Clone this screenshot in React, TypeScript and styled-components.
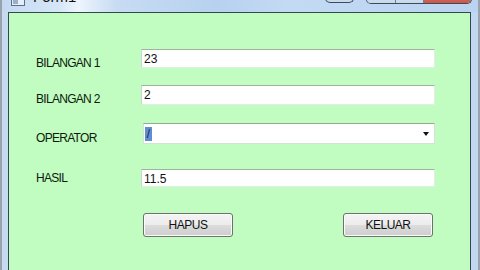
import React from 'react';
import styled, { createGlobalStyle } from 'styled-components';

const GlobalStyle = createGlobalStyle`
  html, body {
    margin: 0;
    padding: 0;
    background: #9aa3ad;
    font-family: 'Liberation Sans', Arial, sans-serif;
  }
`;

const FIELDS = [
  { label: 'BILANGAN 1', value: '23', top: 0, height: 19, labelTop: 7 },
  { label: 'BILANGAN 2', value: '2', top: 15, height: 20, labelTop: 7 },
];

export default function App() {
  return (
    <>
      <GlobalStyle />
      <Screen>
        <Window>
          <TitleBar>
            <AppIcon>
              <svg width="14" height="12" viewBox="0 0 14 12">
                <rect x="0.5" y="0.5" width="13" height="11" fill="#e8eef6" stroke="#56708e" />
                <rect x="1" y="1" width="12" height="3" fill="#4f7fc0" />
                <rect x="2" y="6" width="5" height="4" fill="#9ab0c8" />
              </svg>
            </AppIcon>
            <Caption>Form1</Caption>
            <CaptionButtons>
              <CapButton $w={29}>
                <span />
              </CapButton>
              <ButtonGroup>
                <CapButton $w={29} $joined>
                  <span />
                </CapButton>
                <CapButton $w={28} $joined>
                  <span />
                </CapButton>
                <CloseButton $w={47} $joined>
                  <span />
                </CloseButton>
              </ButtonGroup>
            </CaptionButtons>
          </TitleBar>
          <Frame>
            <Panel>
              <Form>
                {FIELDS.map((f) => (
                  <Row key={f.label} $top={f.top}>
                    <Label $top={f.labelTop}>{f.label}</Label>
                    <TextBox $h={f.height}>{f.value}</TextBox>
                  </Row>
                ))}
                <Row $top={17}>
                  <Label $top={8}>OPERATOR</Label>
                  <ComboBox>
                    <Selected>/</Selected>
                    <Arrow />
                  </ComboBox>
                </Row>
                <Row $top={24}>
                  <Label $top={2}>HASIL</Label>
                  <TextBox $h={18}>11.5</TextBox>
                </Row>
                <ButtonRow>
                  <PushButton>HAPUS</PushButton>
                  <PushButton>KELUAR</PushButton>
                </ButtonRow>
              </Form>
            </Panel>
          </Frame>
        </Window>
      </Screen>
    </>
  );
}

const Screen = styled.div`
  width: 480px;
  height: 270px;
  overflow: hidden;
`;

const Window = styled.div`
  margin-top: -18px;
  display: flex;
  flex-direction: column;
  height: 300px;
`;

const TitleBar = styled.div`
  height: 30px;
  flex: none;
  display: flex;
  align-items: flex-start;
  box-sizing: border-box;
  border-left: 2px solid #9aa3ad;
  border-right: 2px solid #9aa3ad;
  background: linear-gradient(
    90deg,
    #c4d9f1 0%,
    #d6e6f8 12%,
    #eef5fd 16%,
    #c7dcf3 24%,
    #b7d1ef 45%,
    #c3daf4 60%,
    #b9d3f0 100%
  );
`;

const AppIcon = styled.div`
  margin: 10px 0 0 9px;
  width: 14px;
  height: 12px;
`;

const Caption = styled.div`
  margin: 6px 0 0 8px;
  font-family: 'Liberation Sans', Arial, sans-serif;
  font-size: 15px;
  color: #111;
`;

const CaptionButtons = styled.div`
  margin-left: auto;
  margin-right: 6px;
  display: flex;
  gap: 12px;
`;

const ButtonGroup = styled.div`
  display: flex;
  border: 1px solid #3b4a5c;
  border-top: none;
  border-radius: 0 0 5px 5px;
  overflow: hidden;
`;

const CapButton = styled.div<{ $w: number; $joined?: boolean }>`
  width: ${(p) => p.$w}px;
  height: 21px;
  box-sizing: border-box;
  background: linear-gradient(#dfe9f5, #c9d9ec);
  border: ${(p) => (p.$joined ? 'none' : '1px solid #3b4a5c')};
  border-top: none;
  border-right: ${(p) => (p.$joined ? '1px solid #6f7f92' : '1px solid #3b4a5c')};
  border-radius: ${(p) => (p.$joined ? '0' : '0 0 5px 5px')};
  &:last-child {
    border-right: none;
  }
`;

const CloseButton = styled(CapButton)`
  background: linear-gradient(#e6a08f, #c9574a);
`;

const Frame = styled.div`
  flex: 1;
  display: flex;
  box-sizing: border-box;
  border-left: 2px solid #9aa3ad;
  border-right: 2px solid #9aa3ad;
  padding: 0 7px 0 6px;
  background: linear-gradient(90deg, #c6dbf2, #b8d1ee 50%, #c2d8f2);
`;

const Panel = styled.div`
  flex: 1;
  background: #c1fcc1;
  border: 1px solid #33474f;
  padding: 36px 0 0 27px;
`;

const Form = styled.div`
  display: flex;
  flex-direction: column;
  width: 399px;
`;

const Row = styled.div<{ $top: number }>`
  display: grid;
  grid-template-columns: 105px 294px;
  align-items: start;
  margin-top: ${(p) => p.$top}px;
`;

const Label = styled.div<{ $top: number }>`
  padding-top: ${(p) => p.$top}px;
  font-size: 12px;
  line-height: 14px;
  letter-spacing: -0.7px;
  color: #0c1a0c;
`;

const TextBox = styled.div<{ $h: number }>`
  height: ${(p) => p.$h}px;
  box-sizing: border-box;
  background: #fff;
  border: 1px solid #e2eee2;
  border-top-color: #9fb59f;
  border-left-color: #c8dac8;
  padding: 2px 0 0 2px;
  font-size: 12px;
  line-height: 14px;
  color: #111;
`;

const ComboBox = styled.div`
  height: 21px;
  margin-left: 2px;
  box-sizing: border-box;
  background: #fff;
  border: 1px solid #d6e2d6;
  border-top-color: #94aa94;
  display: flex;
  align-items: center;
  padding: 0 5px 0 1px;
`;

const Selected = styled.span`
  display: inline-block;
  width: 7px;
  height: 14px;
  background: #5f8ed2;
  color: #1d2b4a;
  font-size: 12px;
  line-height: 14px;
  text-align: center;
`;

const Arrow = styled.span`
  margin-left: auto;
  width: 0;
  height: 0;
  border-left: 3.5px solid transparent;
  border-right: 3.5px solid transparent;
  border-top: 4px solid #111;
`;

const ButtonRow = styled.div`
  display: flex;
  justify-content: space-between;
  margin: 26px 0 0 107px;
  width: 290px;
`;

const PushButton = styled.div`
  width: 90px;
  height: 24px;
  box-sizing: border-box;
  border: 1px solid #707070;
  border-radius: 3px;
  background: linear-gradient(#f4f4f4 0%, #ececec 48%, #dcdcdc 52%, #cdcdcd 100%);
  box-shadow: inset 0 0 0 1px #fbfbfb;
  display: flex;
  align-items: center;
  justify-content: center;
  font-size: 12px;
  letter-spacing: -0.5px;
  color: #111;
`;
